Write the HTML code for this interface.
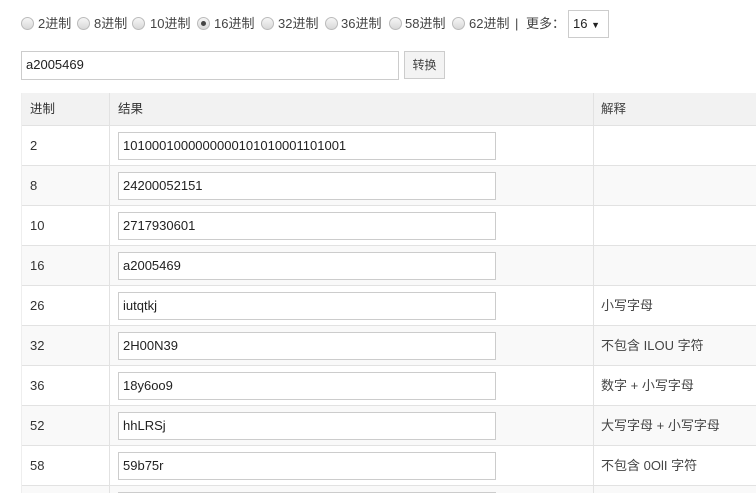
<!DOCTYPE html>
<html><head><meta charset="utf-8"><style>
html,body{margin:0;width:756px;height:493px;overflow:hidden}
body{background:#fff;font-family:"Liberation Sans","Noto Sans CJK SC",sans-serif;font-size:13px;color:#333;position:relative;line-height:16px}
.ab{position:absolute}
.r{position:absolute;top:17px;width:11px;height:11px;border-radius:50%;border:1px solid #bbb;background:linear-gradient(#f6f6f6,#d8d8d8)}
.r.on::after{content:"";position:absolute;left:3px;top:3px;width:5px;height:5px;border-radius:50%;background:#444}
.t{position:absolute;top:16px;color:#444;white-space:nowrap}
.inp{position:absolute;border:1px solid #ccc;background:#fff;box-sizing:border-box;font-size:13px;padding-left:4px;line-height:26px;color:#222}
.row{position:absolute;left:21px;width:735px;height:40px;border-top:1px solid #e2e2e2;box-sizing:border-box;overflow:hidden}
.row .a{position:absolute;left:9px;top:12px}
.row .c{position:absolute;left:580px;top:12px;color:#444}
.vl{position:absolute;top:93px;bottom:0;width:1px;background:#e2e2e2}
</style></head><body>
<span class="r" style="left:21px"></span><span class="t" style="left:38px">2进制</span>
<span class="r" style="left:77px"></span><span class="t" style="left:94px">8进制</span>
<span class="r" style="left:132px"></span><span class="t" style="left:150px">10进制</span>
<span class="r on" style="left:197px"></span><span class="t" style="left:214px">16进制</span>
<span class="r" style="left:261px"></span><span class="t" style="left:278px">32进制</span>
<span class="r" style="left:325px"></span><span class="t" style="left:341px">36进制</span>
<span class="r" style="left:389px"></span><span class="t" style="left:405px">58进制</span>
<span class="r" style="left:452px"></span><span class="t" style="left:469px">62进制</span>
<span class="t" style="left:515px">|</span><span class="t" style="left:526px">更多：</span>
<div class="ab" style="left:568px;top:10px;width:41px;height:28px;border:1px solid #ccc;box-sizing:border-box;font-size:13px;line-height:26px;padding-left:4px;color:#222">16 <span style="font-size:9px">▼</span></div>
<div class="inp" style="left:21px;top:51px;width:378px;height:29px">a2005469</div>
<div class="ab" style="left:404px;top:51px;width:41px;height:28px;border:1px solid #ccc;box-sizing:border-box;background:#f3f3f3;font-size:12px;line-height:26px;text-align:center;color:#444">转换</div>
<div class="row" style="top:93px;height:33px;background:#f2f2f2;border-top:none;border-bottom:1px solid #ddd;font-size:12.5px"><span class="a" style="top:8px">进制</span><span style="position:absolute;left:97px;top:8px">结果</span><span class="c" style="top:8px">解释</span></div>
<div class="row" style="top:125px"><span class="a">2</span><div class="inp" style="left:97px;top:6px;width:378px;height:28px">1010001000000000101010001101001</div></div>
<div class="row" style="top:165px;background:#f9f9f9"><span class="a">8</span><div class="inp" style="left:97px;top:6px;width:378px;height:28px">24200052151</div></div>
<div class="row" style="top:205px"><span class="a">10</span><div class="inp" style="left:97px;top:6px;width:378px;height:28px">2717930601</div></div>
<div class="row" style="top:245px;background:#f9f9f9"><span class="a">16</span><div class="inp" style="left:97px;top:6px;width:378px;height:28px">a2005469</div></div>
<div class="row" style="top:285px"><span class="a">26</span><div class="inp" style="left:97px;top:6px;width:378px;height:28px">iutqtkj</div><span class="c">小写字母</span></div>
<div class="row" style="top:325px;background:#f9f9f9"><span class="a">32</span><div class="inp" style="left:97px;top:6px;width:378px;height:28px">2H00N39</div><span class="c">不包含 ILOU 字符</span></div>
<div class="row" style="top:365px"><span class="a">36</span><div class="inp" style="left:97px;top:6px;width:378px;height:28px">18y6oo9</div><span class="c">数字 + 小写字母</span></div>
<div class="row" style="top:405px;background:#f9f9f9"><span class="a">52</span><div class="inp" style="left:97px;top:6px;width:378px;height:28px">hhLRSj</div><span class="c">大写字母 + 小写字母</span></div>
<div class="row" style="top:445px"><span class="a">58</span><div class="inp" style="left:97px;top:6px;width:378px;height:28px">59b75r</div><span class="c">不包含 0OlI 字符</span></div>
<div class="row" style="top:485px;height:8px;background:#f9f9f9"><div class="inp" style="left:97px;top:6px;width:378px;height:28px"></div></div>
<div class="vl" style="left:21px;background:#eee"></div>
<div class="vl" style="left:109px"></div>
<div class="vl" style="left:593px"></div>
</body></html>
